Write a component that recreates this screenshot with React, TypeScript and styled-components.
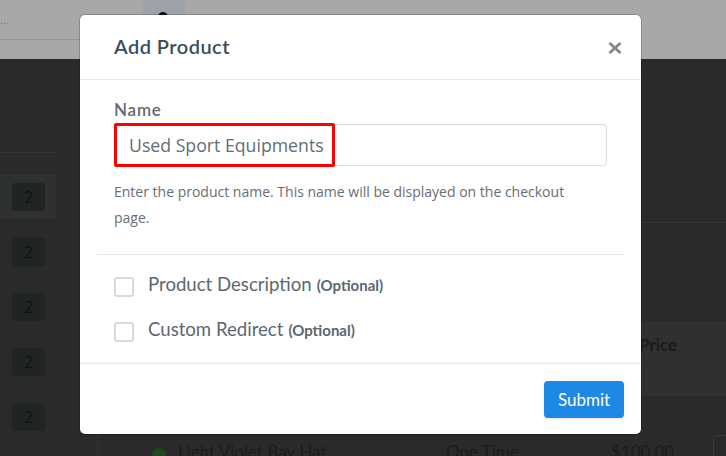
import React from "react";
import styled, { createGlobalStyle } from "styled-components";

const Global = createGlobalStyle`
  html, body { margin: 0; padding: 0; }
  body {
    width: 726px;
    height: 456px;
    overflow: hidden;
    font-family: Lato, "Open Sans", sans-serif;
  }
`;

const Page = styled.div`
  position: relative;
  width: 726px;
  height: 456px;
  overflow: hidden;
  background: #2a2a2a;
  display: flex;
  flex-direction: column;
`;

const TopBar = styled.header`
  flex: none;
  height: 59px;
  background: #a8a8a8;
  display: flex;
  align-items: flex-start;
`;

const Crumbs = styled.div`
  flex: none;
  width: 80px;
  height: 40px;
  border-bottom: 1px solid #949494;
  color: #707070;
  font-family: "Open Sans", sans-serif;
  font-size: 10px;
  line-height: 12px;
  padding: 14px 0 0 0;
  box-sizing: border-box;
  letter-spacing: 0.5px;
`;

const IconBox = styled.div`
  flex: none;
  margin-left: 63px;
  width: 42px;
  height: 30px;
  background: #9ea2a9;
  display: flex;
  justify-content: center;
  padding-top: 12px;
  box-sizing: border-box;
`;

const AvatarDot = styled.div`
  width: 10px;
  height: 10px;
  border-radius: 50%;
  background: #111;
  margin-left: -3px;
`;

const Content = styled.div`
  flex: 1;
  display: flex;
  min-height: 0;
`;

const Sidebar = styled.aside`
  flex: none;
  width: 56px;
  display: flex;
  flex-direction: column;
`;

const SideHead = styled.div`
  height: 93px;
  border-bottom: 1px solid #363636;
`;

const SideList = styled.div`
  padding-top: 22px;
  display: flex;
  flex-direction: column;
  gap: 11px;
`;

const SideRow = styled.div<{ $active?: boolean }>`
  height: 44px;
  display: flex;
  align-items: center;
  background: ${(p) => (p.$active ? "#2f3131" : "transparent")};
`;

const Badge = styled.span`
  margin-left: 12px;
  width: 33px;
  height: 28px;
  border-radius: 4px;
  background: #212424;
  color: #121212;
  font-family: "Open Sans", sans-serif;
  font-size: 16px;
  display: flex;
  align-items: center;
  justify-content: center;
`;

const MainPanel = styled.main`
  margin-left: 41px;
  flex: 1;
  min-width: 0;
  overflow: hidden;
  border-left: 1px solid #333;
  display: flex;
  flex-direction: column;
`;

const TopCard = styled.div`
  flex: none;
  height: 164px;
  box-sizing: border-box;
  border-bottom: 1px solid #353535;
`;

const TableHead = styled.div`
  flex: none;
  margin-top: 98px;
  height: 75px;
  background: #303030;
  padding: 14px 0 0 541px;
  box-sizing: border-box;
  color: #1a1a1a;
  font-weight: 700;
  font-size: 17px;
  line-height: 20px;
`;

const TableRow = styled.div`
  display: flex;
  align-items: flex-start;
  padding-top: 46px;
  color: #1c1c1c;
  font-size: 17px;
  line-height: 20px;
`;

const StatusDot = styled.span`
  margin: 6px 0 0 54px;
  width: 14px;
  height: 14px;
  border-radius: 50%;
  background: #1c4a1c;
  flex: none;
`;

const Cell = styled.span<{ $w: number; $gap?: number }>`
  width: ${(p) => p.$w}px;
  margin-left: ${(p) => p.$gap ?? 0}px;
  flex: none;
  white-space: nowrap;
  overflow: hidden;
`;

const RowAction = styled.span`
  margin-top: -7px;
  width: 40px;
  height: 30px;
  border: 1px solid #3c3c3c;
  border-radius: 4px;
  flex: none;
`;

const Modal = styled.div`
  position: absolute;
  left: 80px;
  top: 15px;
  width: 561px;
  height: 419px;
  background: #fff;
  border-radius: 5px;
  box-shadow: 0 0 0 1px rgba(0, 0, 0, 0.18);
  display: flex;
  flex-direction: column;
`;

const ModalHeader = styled.div`
  height: 65px;
  box-sizing: border-box;
  border-bottom: 1px solid #e8e8e8;
  padding: 19px 19px 0 34px;
  display: flex;
  justify-content: space-between;
  align-items: flex-start;
`;

const Title = styled.h2`
  margin: 0;
  font-family: Lato, sans-serif;
  font-size: 20px;
  line-height: 24px;
  font-weight: 600;
  letter-spacing: 0.45px;
  color: #3d4d58;
`;

const CloseButton = styled.button`
  border: none;
  background: none;
  padding: 0;
  margin-top: 8px;
  width: 14px;
  height: 12px;
  display: flex;
  cursor: pointer;
`;

const ModalBody = styled.div`
  padding: 0 17px;
  display: flex;
  flex-direction: column;
`;

const NameSection = styled.div`
  padding: 20px 17px 23px;
  border-bottom: 1px solid #e6e6e6;
  display: flex;
  flex-direction: column;
`;

const FieldLabel = styled.label`
  font-family: Lato, sans-serif;
  font-size: 17px;
  line-height: 20px;
  font-weight: 600;
  letter-spacing: 0.8px;
  color: #5f6a72;
  margin-bottom: 4px;
`;

const InputWrap = styled.div`
  position: relative;
`;

const TextInput = styled.input`
  display: block;
  width: 100%;
  height: 42px;
  box-sizing: border-box;
  border: 1px solid #dcdcdc;
  border-radius: 4px;
  padding: 0 0 0 14px;
  font-family: "Open Sans", sans-serif;
  font-size: 17.7px;
  color: #636d75;
  background: #fff;
  outline: none;
`;

const Highlight = styled.span`
  position: absolute;
  left: 0;
  top: -1px;
  width: 221px;
  height: 44px;
  box-sizing: border-box;
  border: 3px solid #ff0000;
  border-radius: 2px;
  pointer-events: none;
`;

const HelpText = styled.p`
  margin: 13px 0 0;
  max-width: 470px;
  font-family: "Open Sans", sans-serif;
  font-size: 14px;
  line-height: 26px;
  color: #676e74;
`;

const OptionsSection = styled.div`
  padding: 17px 17px 21px;
  display: flex;
  flex-direction: column;
  gap: 20px;
`;

const OptionRow = styled.label`
  display: flex;
  align-items: flex-start;
  gap: 14px;
  height: 25px;
`;

const Box = styled.span`
  margin-top: 5px;
  width: 20px;
  height: 20px;
  box-sizing: border-box;
  border: 2px solid #d9d9d9;
  border-radius: 3px;
  flex: none;
`;

const OptionText = styled.span`
  font-family: Lato, sans-serif;
  font-size: 18.6px;
  line-height: 25px;
  color: #5c676f;
`;

const Optional = styled.span`
  font-size: 15px;
  font-weight: 700;
  margin-left: 5px;
`;

const ModalFooter = styled.div`
  border-top: 1px solid #e6e6e6;
  padding: 17px 17px 16px;
  display: flex;
  justify-content: flex-end;
`;

const SubmitButton = styled.button`
  width: 80px;
  height: 37px;
  border: none;
  border-radius: 4px;
  background: #1e88e5;
  color: #fff;
  font-family: Lato, sans-serif;
  font-size: 17px;
  box-shadow: 0 1px 2px rgba(0, 0, 0, 0.12);
  cursor: pointer;
`;

const sideRows = [true, false, false, false, false];

export default function App() {
  return (
    <>
      <Global />
      <Page>
        <TopBar>
          <Crumbs>...</Crumbs>
          <IconBox>
            <AvatarDot />
          </IconBox>
        </TopBar>
        <Content>
          <Sidebar>
            <SideHead />
            <SideList>
              {sideRows.map((a, i) => (
                <SideRow key={i} $active={a}>
                  <Badge>2</Badge>
                </SideRow>
              ))}
            </SideList>
          </Sidebar>
          <MainPanel>
            <TopCard />
            <TableHead>Price</TableHead>
            <TableRow>
              <StatusDot />
              <Cell $w={268} $gap={12}>Light Violet Bay Hat</Cell>
              <Cell $w={165}>One Time</Cell>
              <Cell $w={102}>$100.00</Cell>
              <RowAction />
            </TableRow>
          </MainPanel>
        </Content>

        <Modal>
          <ModalHeader>
            <Title>Add Product</Title>
            <CloseButton aria-label="Close">
              <svg width="14" height="12" viewBox="0 0 14 12">
                <path d="M1.5 1 L12.5 11 M12.5 1 L1.5 11" stroke="#878787" strokeWidth="2.8" fill="none" />
              </svg>
            </CloseButton>
          </ModalHeader>
          <ModalBody>
            <NameSection>
              <FieldLabel>Name</FieldLabel>
              <InputWrap>
                <TextInput defaultValue="Used Sport Equipments" />
                <Highlight />
              </InputWrap>
              <HelpText>
                Enter the product name. This name will be displayed on the checkout page.
              </HelpText>
            </NameSection>
            <OptionsSection>
              <OptionRow>
                <Box />
                <OptionText>
                  Product Description<Optional>(Optional)</Optional>
                </OptionText>
              </OptionRow>
              <OptionRow>
                <Box />
                <OptionText>
                  Custom Redirect<Optional>(Optional)</Optional>
                </OptionText>
              </OptionRow>
            </OptionsSection>
          </ModalBody>
          <ModalFooter>
            <SubmitButton>Submit</SubmitButton>
          </ModalFooter>
        </Modal>
      </Page>
    </>
  );
}
